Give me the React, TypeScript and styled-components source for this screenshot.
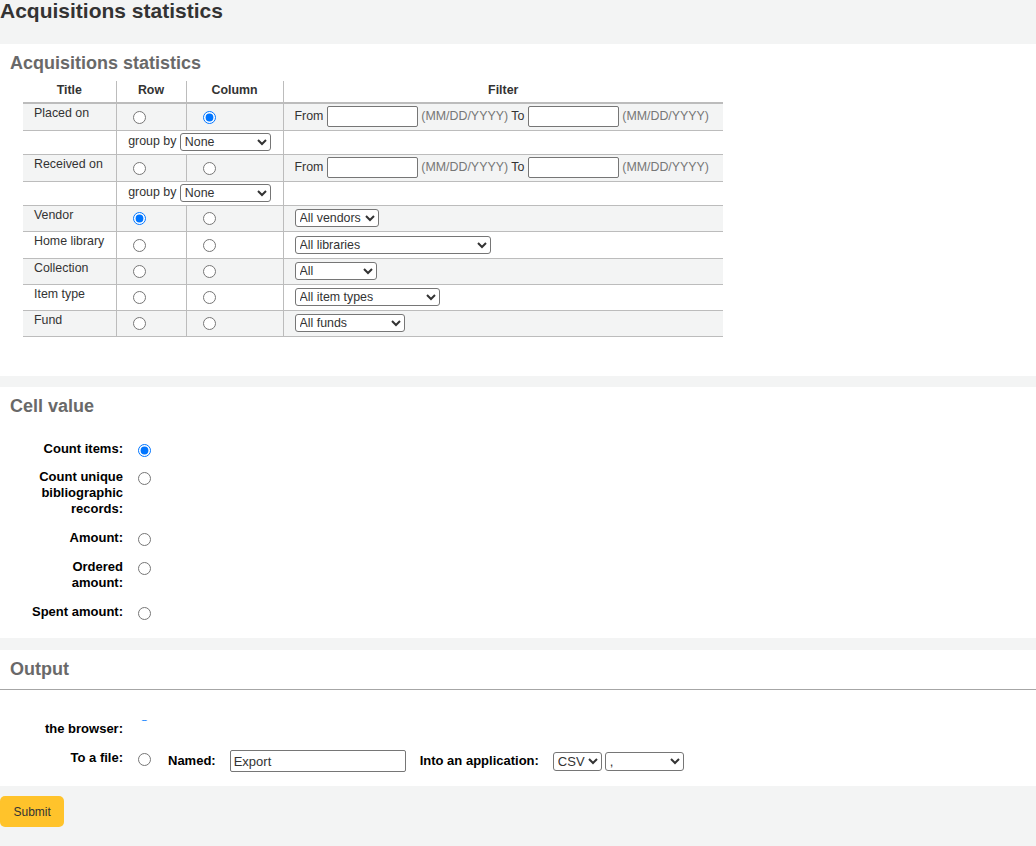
import React from "react";
import styled, { createGlobalStyle } from "styled-components";

const GlobalStyle = createGlobalStyle`
  html, body {
    margin: 0;
    padding: 0;
  }
  body {
    background: #f3f4f4;
    font-family: "Liberation Sans", Arial, sans-serif;
    font-size: 13px;
    color: #333;
  }
`;

const PageTitle = styled.h1`
  margin: 0;
  padding-bottom: 22px;
  font-size: 21px;
  line-height: 22px;
  font-weight: bold;
  color: #333;
`;

const Panel = styled.div<{ $gap: number; $bottom: number }>`
  background: #fff;
  padding: 10px 0 ${(p) => p.$bottom}px;
  margin-bottom: ${(p) => p.$gap}px;
`;

const PanelHeading = styled.h2<{ $rule?: boolean }>`
  margin: 0;
  padding: 0 10px ${(p) => (p.$rule ? "10px" : "0")};
  font-size: 18px;
  line-height: 19px;
  font-weight: bold;
  color: #696969;
  border-bottom: ${(p) => (p.$rule ? "1px solid #a6a6a6" : "none")};
`;

const StatsTable = styled.table`
  margin: 8px 0 0 23px;
  border-collapse: collapse;
  table-layout: fixed;
  width: 700px;
  font-size: 12.4px;
  color: #333;
`;

const HeadCell = styled.th`
  padding: 2px 4px 0;
  height: 19px;
  line-height: 14px;
  font-weight: bold;
  text-align: center;
  vertical-align: top;
  border-bottom: 2px solid #bcbcbc;
  & + & {
    border-left: 1px solid #bcbcbc;
  }
`;

const DataRow = styled.tr<{ $shade: boolean; $h: number }>`
  height: ${(p) => p.$h}px;
  background: ${(p) => (p.$shade ? "#f3f4f4" : "#fff")};
`;

const Cell = styled.td<{ $center?: boolean }>`
  padding: 2px 11px;
  border-top: 1px solid #bcbcbc;
  border-bottom: 1px solid #bcbcbc;
  vertical-align: middle;
  text-align: ${(p) => (p.$center ? "center" : "left")};
  white-space: nowrap;
  & + & {
    border-left: 1px solid #bcbcbc;
  }
`;

const TitleCell = styled(Cell)`
  vertical-align: top;
  padding-top: 2px;
  line-height: 14px;
`;

const Radio = styled.input.attrs({ type: "radio" })`
  width: 13px;
  height: 13px;
  margin: 3px 3px 0 5px;
  flex-shrink: 0;
`;

const TableRadio = styled(Radio)`
  margin-top: 0;
  vertical-align: middle;
`;

const DateInput = styled.input.attrs({ type: "text" })`
  box-sizing: border-box;
  width: 91px;
  height: 21px;
  margin: 0;
  padding: 1px 2px;
  border: 1px solid #767676;
  border-radius: 2px;
  background: #fff;
  font: 12.4px "Liberation Sans", Arial, sans-serif;
  vertical-align: middle;
`;

const Hint = styled.span`
  color: #777;
`;

const Select = styled.select<{ $w: number; $h?: number; $size?: number }>`
  box-sizing: border-box;
  width: ${(p) => p.$w}px;
  height: ${(p) => p.$h ?? 18}px;
  margin: 0;
  border: 1px solid #767676;
  border-radius: 3px;
  background: #fff;
  color: #333;
  font: ${(p) => p.$size ?? 12.4}px "Liberation Sans", Arial, sans-serif;
  vertical-align: middle;
`;

const FormList = styled.ol<{ $top: number }>`
  list-style: none;
  margin: ${(p) => p.$top}px 0 0;
  padding: 0 0 0 27px;
`;

const FormRow = styled.li`
  display: flex;
  align-items: flex-start;
  padding: 6.5px 0 6.25px;
  line-height: 16px;
`;

const RowLabel = styled.label`
  flex-shrink: 0;
  width: 96px;
  margin-right: 10px;
  text-align: right;
  font-weight: bold;
  color: #000;
`;

const OutputBody = styled.div`
  padding-top: 30.5px;
`;

const ClipBox = styled.div`
  overflow: hidden;
`;

const FileOptions = styled.div`
  display: flex;
  align-items: center;
`;

const InlineLabel = styled.label`
  margin-left: 14px;
  font-weight: bold;
  color: #000;
`;

const NameInput = styled.input.attrs({ type: "text" })`
  box-sizing: border-box;
  width: 176px;
  height: 22px;
  margin: 0 0 0 14px;
  padding: 1px 3px;
  border: 1px solid #767676;
  border-radius: 2px;
  color: #333;
  font: 13px "Liberation Sans", Arial, sans-serif;
`;

const SelectGap = styled.span<{ $w: number }>`
  display: inline-block;
  width: ${(p) => p.$w}px;
`;

const SubmitButton = styled.button`
  display: block;
  height: 31px;
  margin: 0;
  padding: 0 13.5px;
  border: none;
  border-radius: 5px;
  background: #ffc32b;
  color: #333;
  font: 12px "Liberation Sans", Arial, sans-serif;
  cursor: pointer;
`;

type FilterKind = "date" | "select";

interface StatRow {
  title: string;
  name: string;
  kind: FilterKind;
  options?: string;
  width?: number;
  rowChecked?: boolean;
  colChecked?: boolean;
  h: number;
}

const statRows: StatRow[] = [
  { title: "Placed on", name: "placed", kind: "date", colChecked: true, h: 27 },
  { title: "Received on", name: "received", kind: "date", h: 27 },
  { title: "Vendor", name: "vendor", kind: "select", options: "All vendors", width: 84, rowChecked: true, h: 26 },
  { title: "Home library", name: "library", kind: "select", options: "All libraries", width: 196, h: 27 },
  { title: "Collection", name: "collection", kind: "select", options: "All", width: 82, h: 26 },
  { title: "Item type", name: "itemtype", kind: "select", options: "All item types", width: 145, h: 26 },
  { title: "Fund", name: "fund", kind: "select", options: "All funds", width: 110, h: 26 },
];

const cellValues = [
  { label: "Count items:", checked: true },
  { label: "Count unique bibliographic records:" },
  { label: "Amount:" },
  { label: "Ordered amount:" },
  { label: "Spent amount:" },
];

const App = () => {
  let stripe = 0;
  const nextShade = () => stripe++ % 2 === 0;

  return (
    <>
      <GlobalStyle />
      <PageTitle>Acquisitions statistics</PageTitle>

      <Panel $gap={11} $bottom={39}>
        <PanelHeading>Acquisitions statistics</PanelHeading>
        <StatsTable>
          <colgroup>
            <col style={{ width: 93 }} />
            <col style={{ width: 70 }} />
            <col style={{ width: 97 }} />
            <col style={{ width: 440 }} />
          </colgroup>
          <thead>
            <tr>
              <HeadCell>Title</HeadCell>
              <HeadCell>Row</HeadCell>
              <HeadCell>Column</HeadCell>
              <HeadCell>Filter</HeadCell>
            </tr>
          </thead>
          <tbody>
            {statRows.map((r) => (
              <React.Fragment key={r.name}>
                <DataRow $shade={nextShade()} $h={r.h}>
                  <TitleCell>{r.title}</TitleCell>
                  <Cell>
                    <TableRadio name="Line" defaultChecked={r.rowChecked} />
                  </Cell>
                  <Cell>
                    <TableRadio name="Column" defaultChecked={r.colChecked} />
                  </Cell>
                  <Cell>
                    {r.kind === "date" ? (
                      <>
                        From <DateInput /> <Hint>(MM/DD/YYYY)</Hint> To <DateInput />{" "}
                        <Hint>(MM/DD/YYYY)</Hint>
                      </>
                    ) : (
                      <Select $w={r.width ?? 100} defaultValue={r.options}>
                        <option>{r.options}</option>
                      </Select>
                    )}
                  </Cell>
                </DataRow>
                {r.kind === "date" && (
                  <DataRow $shade={nextShade()} $h={24}>
                    <Cell />
                    <Cell colSpan={2} $center>
                      group by{" "}
                      <Select $w={91}>
                        <option>None</option>
                        <option>Month</option>
                        <option>Year</option>
                      </Select>
                    </Cell>
                    <Cell />
                  </DataRow>
                )}
              </React.Fragment>
            ))}
          </tbody>
        </StatsTable>
      </Panel>

      <Panel $gap={12} $bottom={12}>
        <PanelHeading>Cell value</PanelHeading>
        <FormList $top={18.5}>
          {cellValues.map((c) => (
            <FormRow key={c.label}>
              <RowLabel>{c.label}</RowLabel>
              <Radio name="Process" defaultChecked={c.checked} />
            </FormRow>
          ))}
        </FormList>
      </Panel>

      <Panel $gap={10} $bottom={8}>
        <PanelHeading $rule>Output</PanelHeading>
        <OutputBody>
          <ClipBox>
            <FormList $top={-21.5}>
              <FormRow>
                <RowLabel>To screen into the browser:</RowLabel>
                <Radio name="output" defaultChecked />
              </FormRow>
              <FormRow>
                <RowLabel>To a file:</RowLabel>
                <Radio name="output" />
                <FileOptions>
                  <InlineLabel>Named:</InlineLabel>
                  <NameInput defaultValue="Export" />
                  <InlineLabel>Into an application:</InlineLabel>
                  <SelectGap $w={14} />
                  <Select $w={49} $h={19} $size={13}>
                    <option>CSV</option>
                  </Select>
                  <SelectGap $w={3} />
                  <Select $w={79} $h={19} $size={13}>
                    <option>,</option>
                    <option>;</option>
                    <option>tab</option>
                  </Select>
                </FileOptions>
              </FormRow>
            </FormList>
          </ClipBox>
        </OutputBody>
      </Panel>

      <SubmitButton type="button">Submit</SubmitButton>
    </>
  );
};

export default App;
